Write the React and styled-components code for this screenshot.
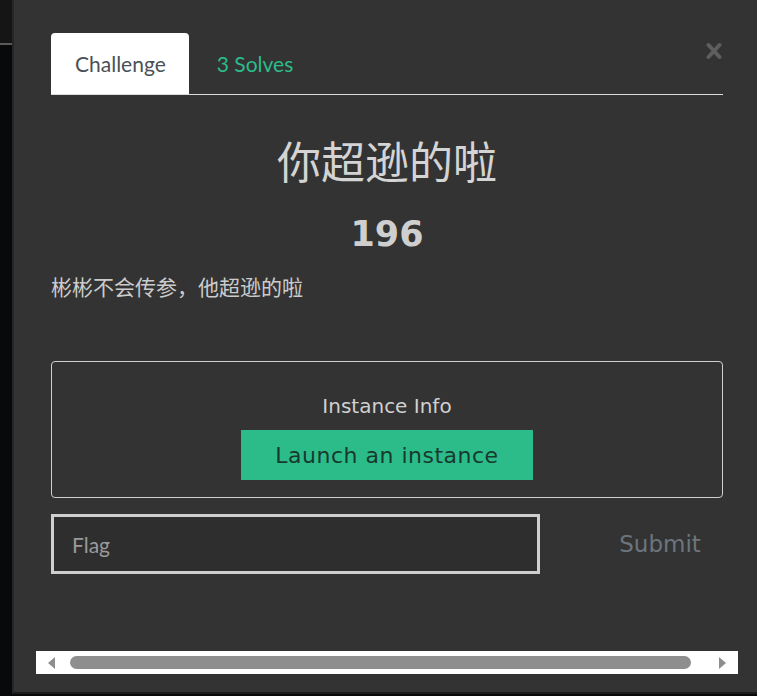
import styled, { createGlobalStyle } from "styled-components";

const GlobalStyle = createGlobalStyle`
  html, body {
    margin: 0;
    padding: 0;
    background: #08090a;
    overflow: hidden;
  }
  * {
    box-sizing: border-box;
  }
`;

export default function App() {
  return (
    <>
      <GlobalStyle />
      <Page>
        <SideRail>
          <RailTop />
          <RailLine />
        </SideRail>

        <Modal>
          <CloseButton aria-label="Close">
            <svg width="16" height="18" viewBox="0 0 16 18">
              <path
                d="M2.5 3 L13.5 15 M13.5 3 L2.5 15"
                stroke="#5e5e5e"
                strokeWidth="4"
                strokeLinecap="round"
              />
            </svg>
          </CloseButton>

          <Tabs>
            <Tab $active>Challenge</Tab>
            <Tab>3 Solves</Tab>
          </Tabs>

          <Title>你超逊的啦</Title>
          <Value>196</Value>
          <Description>彬彬不会传参，他超逊的啦</Description>

          <InstanceBox>
            <InstanceTitle>Instance Info</InstanceTitle>
            <LaunchButton>Launch an instance</LaunchButton>
          </InstanceBox>

          <FlagRow>
            <FlagInput placeholder="Flag" />
            <SubmitButton>Submit</SubmitButton>
          </FlagRow>

          <ScrollTrack>
            <Arrow viewBox="0 0 8 12" width="8" height="12">
              <path d="M7 0 L7 12 L0 6 Z" fill="#8e8e8e" />
            </Arrow>
            <Thumb />
            <Arrow viewBox="0 0 8 12" width="8" height="12">
              <path d="M1 0 L1 12 L8 6 Z" fill="#8e8e8e" />
            </Arrow>
          </ScrollTrack>
        </Modal>
      </Page>
    </>
  );
}

const Page = styled.div`
  display: flex;
  height: 696px;
  width: 757px;
  background: #08090a;
`;

const SideRail = styled.div`
  flex: none;
  width: 12px;
  display: flex;
  flex-direction: column;
`;

const RailTop = styled.div`
  height: 43px;
  background: #151515;
`;

const RailLine = styled.div`
  height: 2px;
  background: #5a5a5a;
`;

const Modal = styled.div`
  position: relative;
  flex: 1;
  min-width: 0;
  height: 694px;
  background: #333333;
  border-left: 2px solid #262626;
  border-bottom: 2px solid #1c1c1c;
  padding: 33px 34px 0 37px;
  display: flex;
  flex-direction: column;
`;

const CloseButton = styled.button`
  position: absolute;
  top: 42px;
  right: 35px;
  width: 16px;
  height: 18px;
  padding: 0;
  border: none;
  background: none;
  display: flex;
`;

const Tabs = styled.div`
  display: flex;
  border-bottom: 1px solid #dcdcdc;
`;

const Tab = styled.div`
  height: 61px;
  display: flex;
  align-items: center;
  padding: ${(p) => (p.$active ? "0 23px 0 24px" : "0 24px 0 28px")};
  font-family: Lato, "Open Sans", sans-serif;
  font-size: 21px;
  color: ${(p) => (p.$active ? "#495057" : "#2bbc8a")};
  background: ${(p) => (p.$active ? "#ffffff" : "transparent")};
  border-radius: 4px 4px 0 0;
`;

const Title = styled.h1`
  margin: 38px 0 0;
  text-align: center;
  font-family: "Noto Sans CJK SC", "Noto Sans", sans-serif;
  font-weight: 400;
  font-size: 44px;
  line-height: 54px;
  color: #d4d4d4;
`;

const Value = styled.h3`
  margin: 26px 0 0;
  text-align: center;
  font-family: "DejaVu Sans", sans-serif;
  font-weight: 700;
  font-size: 35px;
  line-height: 43px;
  color: #cfcfcf;
`;

const Description = styled.p`
  margin: 14px 0 0;
  font-family: "Noto Sans CJK SC", "Noto Sans", sans-serif;
  font-size: 21px;
  line-height: 32px;
  color: #cccccc;
`;

const InstanceBox = styled.div`
  margin-top: 59px;
  height: 137px;
  border: 1px solid #cfcfcf;
  border-radius: 4px;
  padding-top: 32px;
  display: flex;
  flex-direction: column;
  align-items: center;
`;

const InstanceTitle = styled.div`
  font-family: "DejaVu Sans", sans-serif;
  font-size: 20px;
  line-height: 24px;
  color: #d0d0d0;
`;

const LaunchButton = styled.button`
  margin-top: 12px;
  width: 292px;
  height: 50px;
  border: none;
  background: #2bbc8a;
  font-family: "DejaVu Sans", sans-serif;
  font-size: 22px;
  letter-spacing: 0.5px;
  color: #183a2e;
  padding: 0;
`;

const FlagRow = styled.div`
  margin-top: 16px;
  display: flex;
  align-items: center;
`;

const FlagInput = styled.input`
  width: 489px;
  height: 60px;
  border: 3px solid #cfcfcf;
  background: #2e2e2e;
  padding: 0 18px;
  font-family: Lato, "Open Sans", sans-serif;
  font-size: 21px;
  color: #dddddd;
  outline: none;

  &::placeholder {
    color: #9a9a9a;
  }
`;

const SubmitButton = styled.button`
  margin-left: auto;
  width: 126px;
  height: 60px;
  border: none;
  background: none;
  font-family: "DejaVu Sans", sans-serif;
  font-size: 23px;
  color: #6c757d;
  padding: 0;
`;

const ScrollTrack = styled.div`
  margin: 77px 0 0 -15px;
  width: 702px;
  height: 23px;
  background: #ffffff;
  display: flex;
  align-items: center;
  gap: 14px;
  padding: 0 12px;
`;

const Arrow = styled.svg`
  flex: none;
`;

const Thumb = styled.div`
  flex: 1;
  height: 13px;
  margin-right: 13px;
  border-radius: 7px;
  background: #8e8e8e;
`;
